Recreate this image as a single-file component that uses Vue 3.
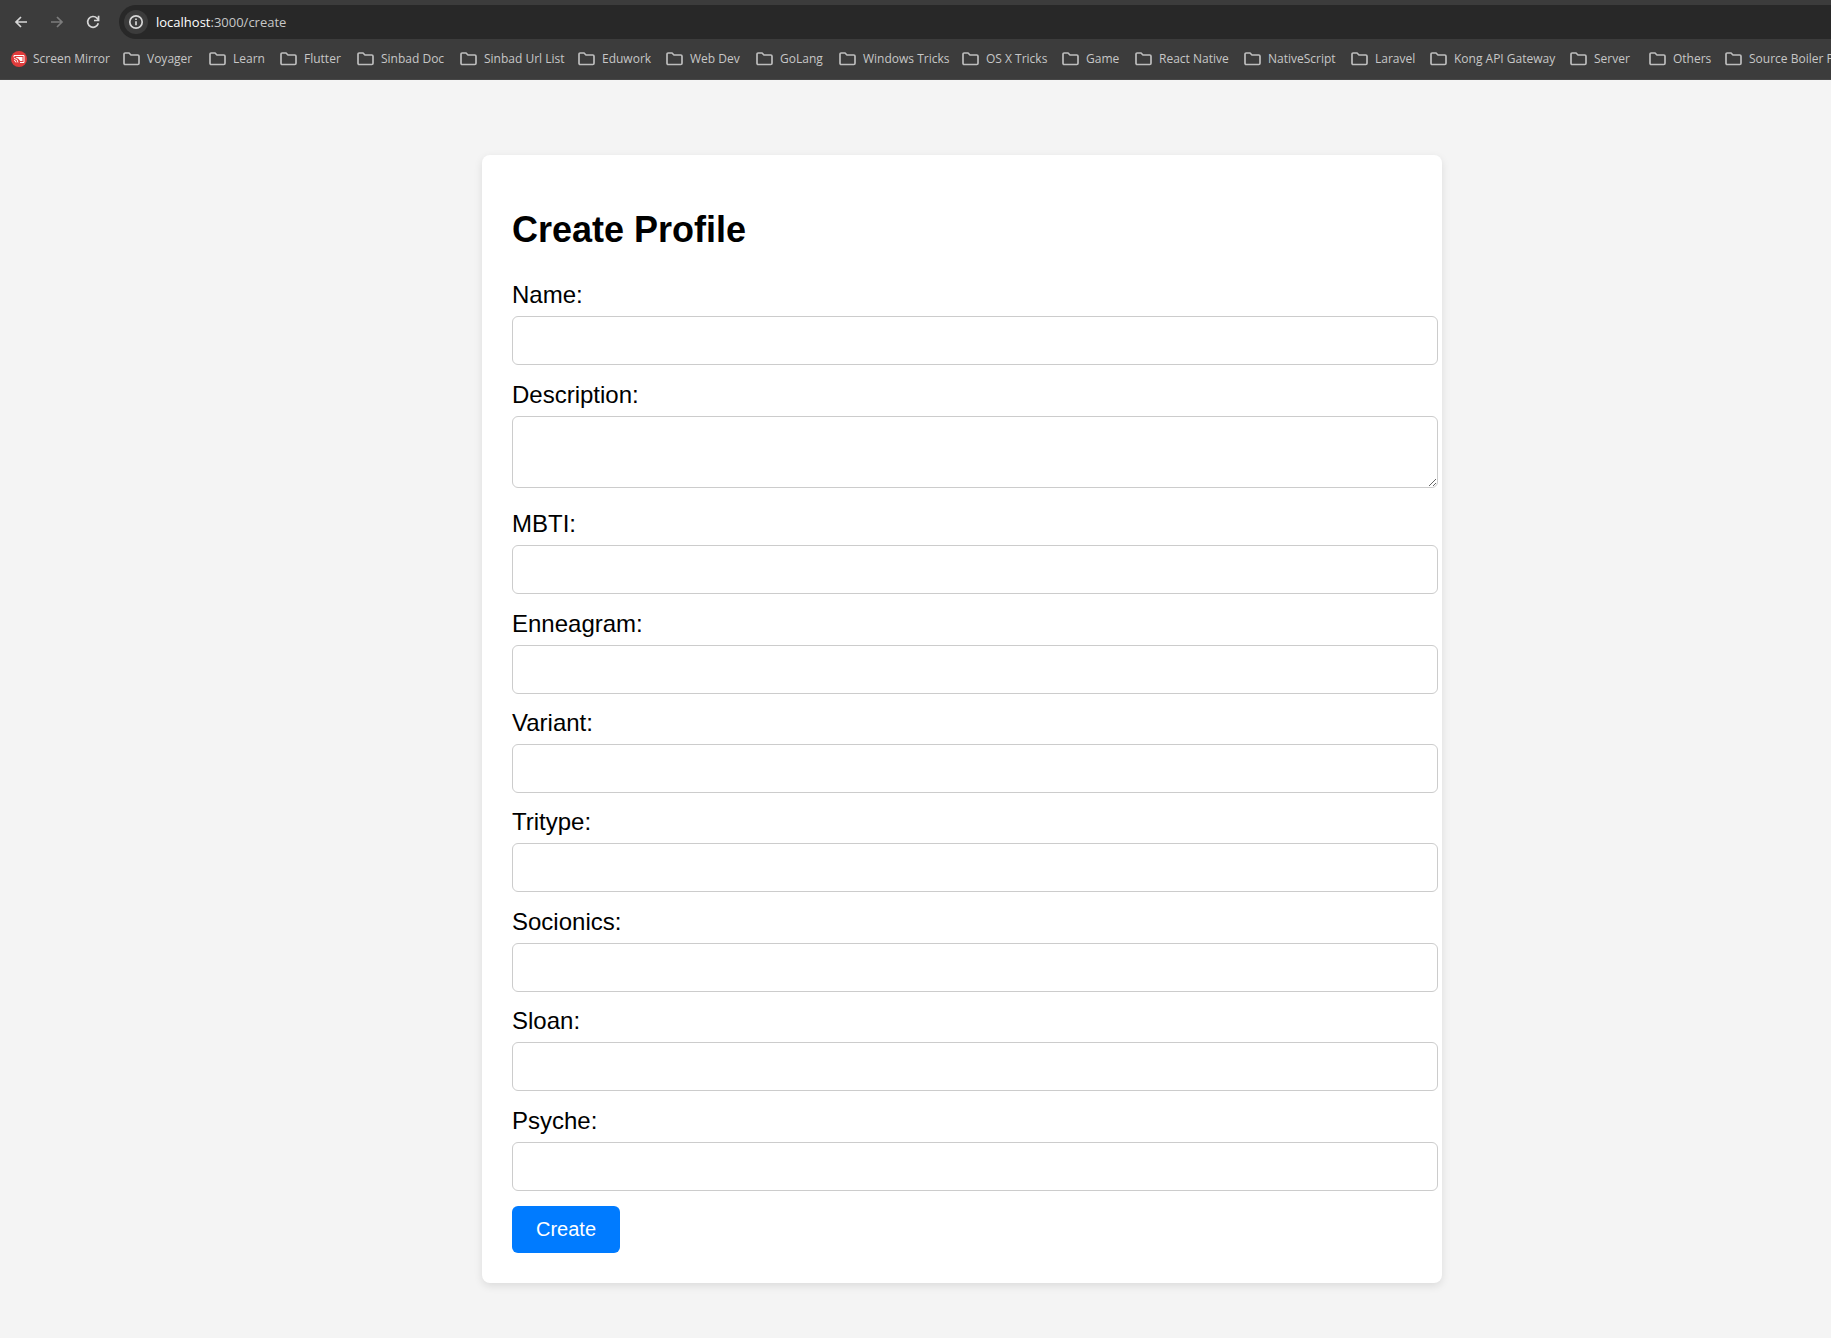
<script setup>
import { reactive } from 'vue'

const folders = [
  'Voyager', 'Learn', 'Flutter', 'Sinbad Doc', 'Sinbad Url List', 'Eduwork',
  'Web Dev', 'GoLang', 'Windows Tricks', 'OS X Tricks', 'Game', 'React Native',
  'NativeScript', 'Laravel', 'Kong API Gateway', 'Server', 'Others', 'Source Boiler P',
]

const fields = [
  { key: 'name', label: 'Name:' },
  { key: 'description', label: 'Description:', multiline: true },
  { key: 'mbti', label: 'MBTI:' },
  { key: 'enneagram', label: 'Enneagram:' },
  { key: 'variant', label: 'Variant:' },
  { key: 'tritype', label: 'Tritype:' },
  { key: 'socionics', label: 'Socionics:' },
  { key: 'sloan', label: 'Sloan:' },
  { key: 'psyche', label: 'Psyche:' },
]

const profile = reactive(Object.fromEntries(fields.map((f) => [f.key, ''])))
</script>

<template>
  <div class="browser">
    <header class="chrome">
      <div class="toolbar">
        <button class="nav" type="button" aria-label="Back">
          <svg viewBox="0 0 16 16" width="16" height="16"><path d="M14 8H3M8 3L3 8l5 5" /></svg>
        </button>
        <button class="nav dim" type="button" aria-label="Forward">
          <svg viewBox="0 0 16 16" width="16" height="16"><path d="M2 8h11M8 3l5 5-5 5" /></svg>
        </button>
        <button class="nav" type="button" aria-label="Reload">
          <svg viewBox="0 0 16 16" width="16" height="16"><path d="M13.300 9.300A5.400 5.400 0 1 1 12 4.200L13.400 5.800M13.600 1.800v4.700H9" /></svg>
        </button>
        <div class="omnibox">
          <button class="site-info" type="button" aria-label="Site information">
            <svg viewBox="0 0 16 16" width="16" height="16">
              <circle cx="8" cy="8" r="6.2" /><path d="M8 7.2v4M8 4.6v1.5" />
            </svg>
          </button>
          <span class="url"><b>localhost</b>:3000/create</span>
        </div>
      </div>
      <nav class="bookmarks">
        <a class="bookmark mirror" href="#">
          <svg viewBox="0 0 16 16" width="16" height="16">
            <circle cx="8" cy="8" r="8" fill="#e03c3c" />
            <path d="M3 6.300V4.500H13v7H9" fill="none" stroke="#fff" />
            <path d="M5 6h6.500v4H9.200A6 6 0 0 0 5 6.500z" fill="#fff" />
            <path d="M3 7.500a4 4 0 0 1 4 4M3 9.500a2 2 0 0 1 2 2" fill="none" stroke="#fff" />
          </svg>
          <span>Screen Mirror</span>
        </a>
        <a v-for="folder in folders" :key="folder" class="bookmark" href="#">
          <svg class="folder" viewBox="0 0 17 14" width="17" height="14">
            <path d="M1 2.200Q1 1 2.200 1H6l2 2h6.800Q16 3 16 4.200V11.300Q16 12.500 14.800 12.500H2.200Q1 12.500 1 11.300z" />
          </svg>
          <span>{{ folder }}</span>
        </a>
      </nav>
    </header>

    <main class="page">
      <form class="card" @submit.prevent>
        <h1>Create Profile</h1>
        <div v-for="field in fields" :key="field.key" class="field">
          <label :for="field.key">{{ field.label }}</label>
          <textarea v-if="field.multiline" :id="field.key" v-model="profile[field.key]"></textarea>
          <input v-else :id="field.key" v-model="profile[field.key]" type="text" />
        </div>
        <button class="submit" type="submit">Create</button>
      </form>
    </main>
  </div>
</template>

<style>
body {
  background: #f4f4f4;
}
</style>

<style scoped>
.browser {
  display: flex;
  flex-direction: column;
  min-height: 100vh;
  overflow: hidden;
}

.chrome {
  background: #3c3c3c;
  border-bottom: 1px solid #474747;
  font-family: "Open Sans", "Noto Sans", sans-serif;
}

.toolbar {
  display: flex;
  align-items: center;
  padding: 5px 0 0 13px;
}

.nav {
  width: 36px;
  height: 34px;
  padding: 0;
  border: 0;
  background: none;
}

.nav svg,
.site-info svg {
  display: block;
  fill: none;
  stroke: #d6d6d6;
  stroke-width: 1.7;
}

.nav.dim svg {
  stroke: #7c7c7c;
}

.omnibox {
  flex: 1;
  display: flex;
  align-items: center;
  gap: 8px;
  height: 34px;
  margin-left: -2px;
  padding-left: 5px;
  border-radius: 17px 0 0 17px;
  background: #282828;
}

.site-info {
  width: 24px;
  height: 24px;
  padding: 4px;
  border: 0;
  border-radius: 50%;
  background: #3c3c3c;
}

.url {
  color: #c7c7c7;
  font-size: 13px;
}

.url b {
  color: #fff;
  font-weight: 400;
}

.bookmarks {
  display: grid;
  grid-template-columns:
    112px 86px 71px 77px 103px 118px 88px 90px 83px 123px
    100px 73px 109px 107px 79px 140px 79px 76px 140px;
  height: 40px;
  padding-left: 11px;
}

.bookmark {
  display: flex;
  align-items: center;
  gap: 7px;
  color: #c7c7c7;
  font-size: 12px;
  text-decoration: none;
  white-space: nowrap;
}

.bookmark span {
  padding-bottom: 2px;
}

.mirror {
  gap: 6px;
}

.bookmark svg {
  flex: none;
}

.folder {
  fill: none;
  stroke: #bdbdbd;
  stroke-width: 1.7;
}

.page {
  flex: 1;
  display: flex;
  justify-content: center;
  padding: 75px 0 55px 93px;
  font-family: Arial, "Liberation Sans", sans-serif;
}

.card {
  display: flex;
  flex-direction: column;
  justify-content: space-between;
  gap: 15px;
  width: 100%;
  max-width: 900px;
  padding: 30px;
  border-radius: 8px;
  background: #fff;
  box-shadow: 0 3px 9px rgba(0, 0, 0, 0.1);
}

h1 {
  margin: 24px 0 16px;
  color: #000;
  font-size: 36px;
  line-height: 41px;
}

label {
  display: block;
  margin-bottom: 8px;
  color: #000;
  font-size: 24px;
  line-height: 27px;
}

input,
textarea {
  display: block;
  box-sizing: content-box;
  width: 100%;
  height: 23px;
  margin: 0;
  padding: 12px;
  border: 1px solid #ccc;
  border-radius: 6px;
  background: #fff;
  font-family: inherit;
  font-size: 20px;
}

textarea {
  height: 46px;
  margin-bottom: 7px;
}

.submit {
  align-self: flex-start;
  height: 47px;
  padding: 0 24px;
  border: 0;
  border-radius: 6px;
  background: #007bff;
  color: #fff;
  font-family: inherit;
  font-size: 20px;
}
</style>
